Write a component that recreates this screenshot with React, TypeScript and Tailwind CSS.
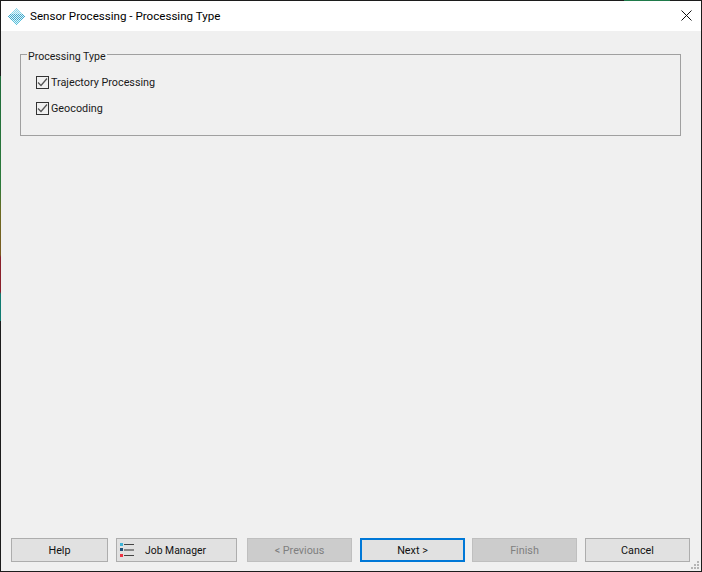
import React from 'react';

const font = { fontFamily: 'Roboto, "Noto Sans", sans-serif' };

// diamond made of checkerboard pixels, like the app logo
const Logo = () => {
  const dots: React.ReactElement[] = [];
  for (let dy = -8; dy <= 8; dy++) {
    for (let dx = -8; dx <= 8; dx++) {
      if (Math.abs(dx) + Math.abs(dy) > 8) continue;
      const on = (dx + dy + 16) % 2 === 0;
      const fill = on ? (dy < -2 ? '#8fd6e8' : dy > 3 ? '#5cc2dc' : '#3fa9cc') : '#e2f4f9';
      dots.push(<rect key={`${dx}-${dy}`} x={dx + 8} y={dy + 8} width={1} height={1} fill={fill} />);
    }
  }
  return (
    <svg width="17" height="17" viewBox="0 0 17 17" className="shrink-0" shapeRendering="crispEdges">
      {dots}
    </svg>
  );
};

const JobIcon = () => (
  <svg width="15" height="14" viewBox="0 0 15 14" className="shrink-0">
    <rect x="0" y="0" width="3" height="3" fill="#3fb4d8" />
    <rect x="0" y="5" width="3" height="3" fill="#1f4f78" />
    <rect x="0" y="11" width="3" height="3" fill="#ee3344" />
    <rect x="4" y="1" width="10" height="1" fill="#444444" />
    <rect x="4" y="6" width="10" height="2" fill="#888888" />
    <rect x="4" y="12" width="10" height="1" fill="#444444" />
  </svg>
);

const CheckRow = ({ label }: { label: string }) => (
  <label className="flex items-center h-[14px] gap-[2px]">
    <span className="w-[13px] h-[13px] border border-[#333333] bg-[#f0f0f0] flex items-center justify-center">
      <svg width="11" height="11" viewBox="0 0 11 11">
        <path d="M1 5.5 L4 8.5 L10 1.5" fill="none" stroke="#555555" strokeWidth="1.3" />
      </svg>
    </span>
    <span className="text-[10.8px] leading-none text-[#1a1a1a] mt-[2px]">{label}</span>
  </label>
);

const Btn = ({ label, w, disabled, focus }: { label: string; w: string; disabled?: boolean; focus?: boolean }) => (
  <button
    className={`${w} h-[24px] pt-[2px] text-[10.8px] flex items-center justify-center ${
      disabled
        ? 'bg-[#cccccc] border border-[#bfbfbf] text-[#7f7f7f]'
        : focus
          ? 'bg-[#e1e1e1] border-2 border-[#0078d7] text-[#111111]'
          : 'bg-[#e1e1e1] border border-[#adadad] text-[#111111]'
    }`}
  >
    {label}
  </button>
);

export default function App() {
  return (
    <div className="w-[702px] h-[572px] relative bg-[#1c1c1c] pl-px pr-px pb-px flex flex-col" style={font}>
      {/* desktop showing through the window edge */}
      <div className="absolute left-0 top-[76px] w-px h-[245px] bg-[linear-gradient(to_bottom,#1f6b3a_0%,#2c7a3a_45%,#6b6a20_55%,#7a5a20_73%,#8a1f2a_74%,#8a1f2a_88%,#0f7a70_89%,#0f7a70_100%)]" />
      <div className="absolute left-[624px] top-0 w-[46px] h-px bg-[#1f7a4a]" />
      <div className="h-[30px] bg-white flex items-center shrink-0 mt-px">
        <div className="ml-[7px]">
          <Logo />
        </div>
        <span className="ml-[5px] mt-[2px] text-[11.6px] text-black">Sensor Processing - Processing Type</span>
        <svg width="11" height="11" viewBox="0 0 11 11" className="ml-auto mr-[9px] mb-[2px]">
          <path d="M0.5 0.5 L10.5 10.5 M10.5 0.5 L0.5 10.5" stroke="#111111" strokeWidth="1" />
        </svg>
      </div>
      <div className="flex-1 bg-[#f0f0f0] flex flex-col relative">
        <div className="mt-[23px] ml-[19px] mr-[20px] h-[82px] border border-[#a0a0a0] relative flex flex-col gap-[12px] pt-[20px] pl-[15px]">
          <span className="absolute left-[6px] -top-[6px] bg-[#f0f0f0] px-px text-[10.6px] leading-[16px] text-[#1a1a1a]">
            Processing Type
          </span>
          <CheckRow label="Trajectory Processing" />
          <CheckRow label="Geocoding" />
        </div>
        <div className="mt-auto mb-[9px] pl-[10px] flex">
          <Btn label="Help" w="w-[97px]" />
          <button className="ml-[8px] w-[121px] h-[24px] bg-[#e1e1e1] border border-[#adadad] flex items-center pl-[3px] text-[10.4px] text-[#111111]">
            <JobIcon />
            <span className="ml-[10px] pt-[2px]">Job Manager</span>
          </button>
          <div className="ml-[10px]">
            <Btn label="< Previous" w="w-[105px]" disabled />
          </div>
          <div className="ml-[8px]">
            <Btn label="Next >" w="w-[105px]" focus />
          </div>
          <div className="ml-[7px]">
            <Btn label="Finish" w="w-[105px]" disabled />
          </div>
          <div className="ml-[8px]">
            <Btn label="Cancel" w="w-[105px]" />
          </div>
        </div>
        {/* size grip */}
        <svg width="10" height="10" viewBox="0 0 10 10" className="absolute right-[1px] bottom-[1px]">
          <g fill="#b5b5b5">
            <rect x="7" y="1" width="2" height="2" />
            <rect x="4" y="4" width="2" height="2" />
            <rect x="7" y="4" width="2" height="2" />
            <rect x="1" y="7" width="2" height="2" />
            <rect x="4" y="7" width="2" height="2" />
            <rect x="7" y="7" width="2" height="2" />
          </g>
        </svg>
      </div>
    </div>
  );
}
